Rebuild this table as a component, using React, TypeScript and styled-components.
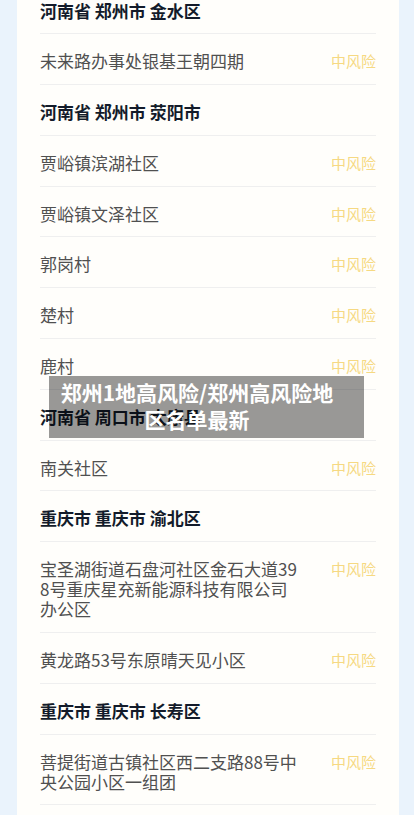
import React from 'react';
import styled, { createGlobalStyle } from 'styled-components';

const GlobalStyle = createGlobalStyle`
  html, body {
    margin: 0;
    padding: 0;
    background: #eaf3fc;
    font-family: "Noto Sans CJK SC", "Noto Sans", sans-serif;
  }
`

const Page = styled.div`
  width: 414px;
  height: 815px;
  overflow: hidden;
  position: relative;
  background: #eaf3fc;
`

const Card = styled.div`
  display: flow-root;
  margin: 0 15px 0 17px;
  height: 100%;
  background: #fffefb;
  padding: 0 23px;
  box-sizing: border-box;
`

const List = styled.div`
  margin-top: -16.5px;
`

const Row = styled.div`
  display: flex;
  justify-content: space-between;
  align-items: flex-start;
  padding: 17px 0 12.8px;
  border-bottom: 1px solid #efefef;
`

const Region = styled.div`
  font-size: 17px;
  line-height: 20px;
  font-weight: 700;
  color: #131b2a;
  white-space: pre;
`

const Place = styled.div`
  width: 263px;
  font-size: 17px;
  line-height: 20px;
  color: #505050;
  word-break: break-all;
`

const Risk = styled.span`
  font-size: 15px;
  line-height: 20px;
  color: #f6d982;
`

const Banner = styled.div`
  position: absolute;
  left: 49px;
  top: 376px;
  width: 315px;
  height: 62px;
  background: rgba(0, 0, 0, 0.4);
  box-sizing: border-box;
  padding: 3px 0 0 9px;
`

const BannerTitle = styled.div`
  width: 278px;
  text-align: center;
  color: #ffffff;
  font-size: 21px;
  line-height: 27px;
  font-weight: 700;
`

type Item = { kind: 'region' | 'place'; text: string };

const items: Item[] = [
  { kind: 'region', text: '河南省 郑州市 金水区' },
  { kind: 'place', text: '未来路办事处银基王朝四期' },
  { kind: 'region', text: '河南省 郑州市 荥阳市' },
  { kind: 'place', text: '贾峪镇滨湖社区' },
  { kind: 'place', text: '贾峪镇文泽社区' },
  { kind: 'place', text: '郭岗村' },
  { kind: 'place', text: '楚村' },
  { kind: 'place', text: '鹿村' },
  { kind: 'region', text: '河南省 周口市 太康县' },
  { kind: 'place', text: '南关社区' },
  { kind: 'region', text: '重庆市 重庆市 渝北区' },
  { kind: 'place', text: '宝圣湖街道石盘河社区金石大道398号重庆星充新能源科技有限公司办公区' },
  { kind: 'place', text: '黄龙路53号东原晴天见小区' },
  { kind: 'region', text: '重庆市 重庆市 长寿区' },
  { kind: 'place', text: '菩提街道古镇社区西二支路88号中央公园小区一组团' },
];

export default function App() {
  return (
    <>
      <GlobalStyle />
      <Page>
        <Card>
          <List>
            {items.map((it, i) =>
              it.kind === 'region' ? (
                <Row key={i}>
                  <Region>{it.text}</Region>
                </Row>
              ) : (
                <Row key={i}>
                  <Place>{it.text}</Place>
                  <Risk>中风险</Risk>
                </Row>
              )
            )}
          </List>
        </Card>
        <Banner>
          <BannerTitle>郑州1地高风险/郑州高风险地区名单最新</BannerTitle>
        </Banner>
      </Page>
    </>
  );
}
